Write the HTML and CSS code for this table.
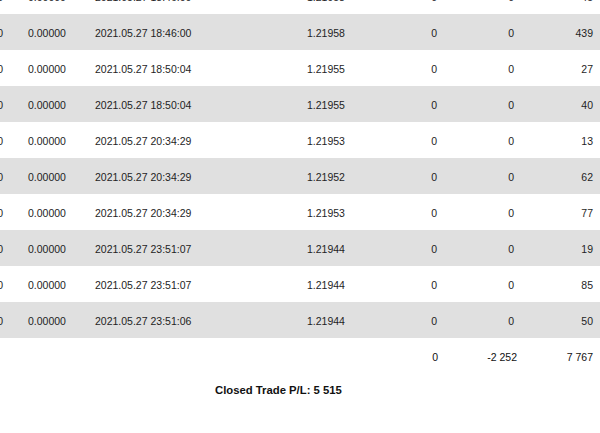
FILE: index.html
```html
<!DOCTYPE html>
<html>
<head>
<meta charset="utf-8">
<link rel="stylesheet" href="styles.css">
</head>
<body>
<table class="report">
  <colgroup>
    <col class="c-a"><col class="c-b"><col class="c-c"><col class="c-d"><col class="c-e"><col class="c-f"><col class="c-g"><col class="c-h">
  </colgroup>
  <tbody>
    <tr class="row">
      <td class="r">0.00000</td><td class="l pad">0.00000</td><td class="l">2021.05.27 18:46:00</td><td class="l">1.21958</td><td class="r">0</td><td class="r">0</td><td class="r">45</td><td></td>
    </tr>
    <tr class="row alt">
      <td class="r">0.00000</td><td class="l pad">0.00000</td><td class="l">2021.05.27 18:46:00</td><td class="l">1.21958</td><td class="r">0</td><td class="r">0</td><td class="r">439</td><td></td>
    </tr>
    <tr class="row">
      <td class="r">0.00000</td><td class="l pad">0.00000</td><td class="l">2021.05.27 18:50:04</td><td class="l">1.21955</td><td class="r">0</td><td class="r">0</td><td class="r">27</td><td></td>
    </tr>
    <tr class="row alt">
      <td class="r">0.00000</td><td class="l pad">0.00000</td><td class="l">2021.05.27 18:50:04</td><td class="l">1.21955</td><td class="r">0</td><td class="r">0</td><td class="r">40</td><td></td>
    </tr>
    <tr class="row">
      <td class="r">0.00000</td><td class="l pad">0.00000</td><td class="l">2021.05.27 20:34:29</td><td class="l">1.21953</td><td class="r">0</td><td class="r">0</td><td class="r">13</td><td></td>
    </tr>
    <tr class="row alt">
      <td class="r">0.00000</td><td class="l pad">0.00000</td><td class="l">2021.05.27 20:34:29</td><td class="l">1.21952</td><td class="r">0</td><td class="r">0</td><td class="r">62</td><td></td>
    </tr>
    <tr class="row">
      <td class="r">0.00000</td><td class="l pad">0.00000</td><td class="l">2021.05.27 20:34:29</td><td class="l">1.21953</td><td class="r">0</td><td class="r">0</td><td class="r">77</td><td></td>
    </tr>
    <tr class="row alt">
      <td class="r">0.00000</td><td class="l pad">0.00000</td><td class="l">2021.05.27 23:51:07</td><td class="l">1.21944</td><td class="r">0</td><td class="r">0</td><td class="r">19</td><td></td>
    </tr>
    <tr class="row">
      <td class="r">0.00000</td><td class="l pad">0.00000</td><td class="l">2021.05.27 23:51:07</td><td class="l">1.21944</td><td class="r">0</td><td class="r">0</td><td class="r">85</td><td></td>
    </tr>
    <tr class="row alt">
      <td class="r">0.00000</td><td class="l pad">0.00000</td><td class="l">2021.05.27 23:51:06</td><td class="l">1.21944</td><td class="r">0</td><td class="r">0</td><td class="r">50</td><td></td>
    </tr>
    <tr class="row totals">
      <td></td><td></td><td></td><td></td><td class="r"><span class="shift-1">0</span></td><td class="r"><span class="shift-3">-2&nbsp;252</span></td><td class="r">7&nbsp;767</td><td></td>
    </tr>
    <tr class="summary">
      <td colspan="8"><span class="closed">Closed Trade P/L: 5&nbsp;515</span></td>
    </tr>
  </tbody>
</table>
</body>
</html>
```

FILE: styles.css
```css
html, body {
  margin: 0;
  padding: 0;
  background: #ffffff;
}

body {
  width: 600px;
  height: 433px;
  overflow: hidden;
  font-family: "Liberation Sans", Arial, sans-serif;
  font-size: 10.5px;
  color: #1e1e1e;
}

.report {
  border-collapse: collapse;
  border-spacing: 0;
  table-layout: fixed;
  width: 657px;
  margin-left: -57px;
  margin-top: -22px;
}

.c-a { width: 60px; }
.c-b { width: 92px; }
.c-c { width: 212px; }
.c-d { width: 73px; }
.c-e { width: 57px; }
.c-f { width: 77px; }
.c-g { width: 79px; }
.c-h { width: 7px; }

.row td {
  height: 33px;
  padding: 3px 0 0 0;
  line-height: 33px;
  white-space: nowrap;
  vertical-align: top;
  overflow: visible;
}

.row.alt {
  background: #e0e0e0;
}

.l { text-align: left; }
.r { text-align: right; }
.pad { padding-left: 25px !important; }

.totals td {
  color: #111111;
}

.shift-1 {
  display: inline-block;
  margin-right: -1px;
}

.shift-3 {
  display: inline-block;
  margin-right: -3px;
}

.summary td {
  height: 32px;
  padding: 0;
  text-align: left;
}

.closed {
  display: block;
  padding-left: 272px;
  font-weight: bold;
  font-size: 11.3px;
  color: #111111;
  line-height: 32px;
}
```
